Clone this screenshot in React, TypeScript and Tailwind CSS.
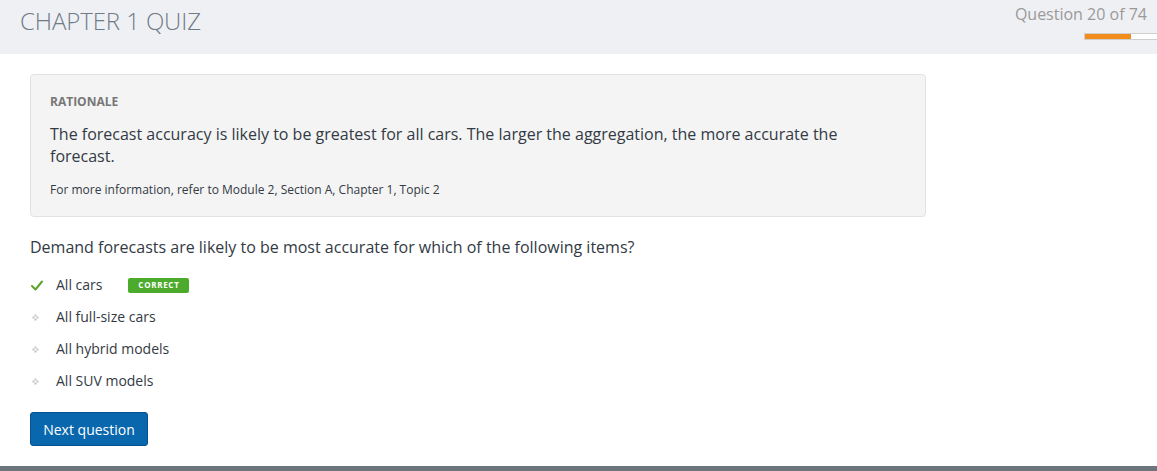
import React from "react";

const font = { fontFamily: '"Open Sans", "Liberation Sans", sans-serif' };

function Check() {
  return (
    <svg width="12" height="11" viewBox="0 0 12 11" className="block">
      <path d="M1 6 L4.5 9.5 L11 1.5" stroke="#5ea12f" strokeWidth="2" fill="none" strokeLinecap="round" strokeLinejoin="round" />
    </svg>
  );
}

function Dot() {
  return (
    <svg width="7" height="7" viewBox="0 0 7 7" className="block">
      <rect x="2.5" y="0.5" width="2" height="2" fill="#c4c4c4" />
      <rect x="0.5" y="2.5" width="2" height="2" fill="#c4c4c4" />
      <rect x="4.5" y="2.5" width="2" height="2" fill="#c4c4c4" />
      <rect x="2.5" y="4.5" width="2" height="2" fill="#c4c4c4" />
    </svg>
  );
}

export default function App() {
  const options = [
    { text: "All cars", correct: true },
    { text: "All full-size cars" },
    { text: "All hybrid models" },
    { text: "All SUV models" },
  ];
  return (
    <div style={font} className="w-[1157px] h-[471px] bg-white flex flex-col overflow-hidden">
      <header className="h-[54px] bg-[#eff0f4] flex justify-between shrink-0">
        <h1 className="pl-[20px] pt-[5px] text-[24px] leading-[32px] font-light text-[#6f7b87] tracking-[-0.1px]">
          CHAPTER 1 QUIZ
        </h1>
        <div className="flex flex-col items-end pt-[3px]">
          <div className="pr-[10px] text-[16px] leading-[22px] text-[#9a9a9a]">Question 20 of 74</div>
          <div className="mt-[8px] w-[73px] h-[7px] bg-white border border-[#cfcfcf] border-r-0 flex">
            <div className="w-[46px] h-full bg-[#f28c1c]" />
          </div>
        </div>
      </header>
      <main className="flex-1 px-[30px] pt-[20px]">
        <section className="w-[896px] bg-[#f4f4f4] border border-[#e2e2e2] rounded-[4px] pt-[18px] pb-[18px] px-[19px]">
          <div className="text-[12px] leading-[17px] font-bold text-[#777]">RATIONALE</div>
          <p className="mt-[13px] text-[16px] leading-[22px] text-[#333a44]">
            The forecast accuracy is likely to be greatest for all cars. The larger the aggregation, the more accurate the forecast.
          </p>
          <p className="mt-[14px] text-[12px] leading-[17px] text-[#333a44]">
            For more information, refer to Module 2, Section A, Chapter 1, Topic 2
          </p>
        </section>
        <p className="mt-[19px] text-[16px] leading-[22px] text-[#333a44]">
          Demand forecasts are likely to be most accurate for which of the following items?
        </p>
        <ul className="mt-[11px]">
          {options.map((o) => (
            <li key={o.text} className="h-[32px] flex items-center">
              <span className="w-[26px] flex justify-start">
                {o.correct ? (
                  <span className="pl-[1px]"><Check /></span>
                ) : (
                  <span className="pl-[2px]"><Dot /></span>
                )}
              </span>
              <span className="text-[14px] leading-[20px] text-[#333a44]">{o.text}</span>
              {o.correct && (
                <span className="ml-[26px] h-[15px] w-[61px] rounded-[2px] bg-[#4caa2c] text-white text-[8px] font-bold tracking-[0.7px] flex items-center justify-center">
                  CORRECT
                </span>
              )}
            </li>
          ))}
        </ul>
        <button className="mt-[15px] w-[118px] h-[34px] rounded-[3px] bg-[#0867ad] border border-[#05528c] text-white text-[14px] font-medium">
          Next question
        </button>
      </main>
      <div className="h-[5px] bg-[#6b757b] shrink-0" />
    </div>
  );
}
